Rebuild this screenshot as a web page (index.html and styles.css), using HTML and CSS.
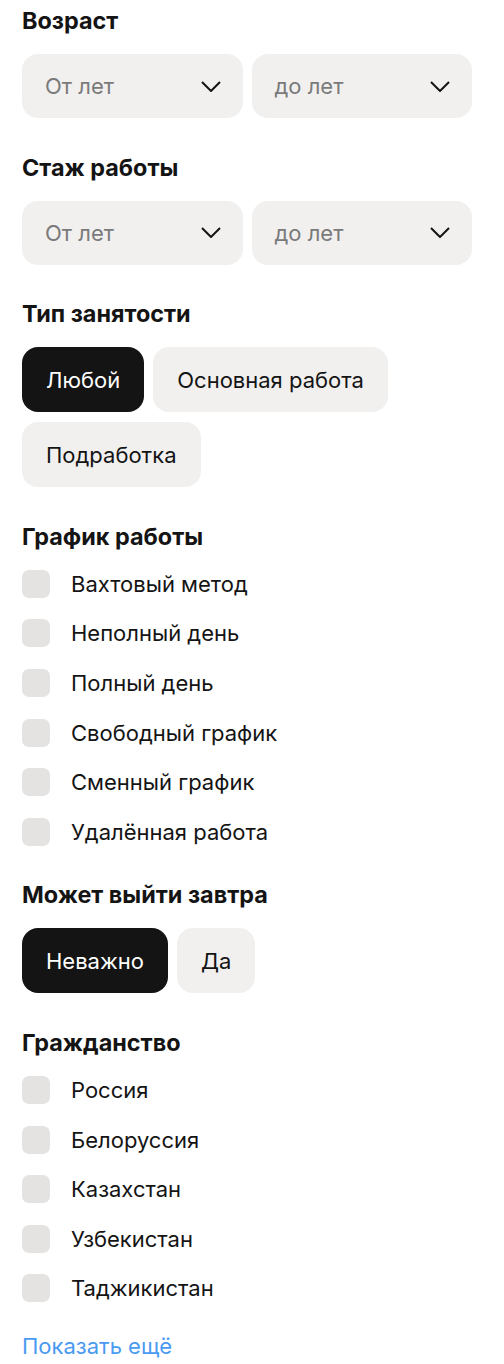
FILE: index.html
```html
<!DOCTYPE html>
<html lang="ru">
<head>
    <meta charset="UTF-8">
    <meta name="viewport" content="width=device-width, initial-scale=1.0">
    <title>Фильтры</title>
    <link rel="stylesheet" href="styles.css">
</head>
<body>
    <div class="filters">
        <section class="filter">
            <h3>Возраст</h3>
            <div class="range">
                <div class="select"><span>От лет</span><svg class="chevron" viewBox="0 0 20 11"><path d="M1 1l9 9 9-9"/></svg></div>
                <div class="select"><span>до лет</span><svg class="chevron" viewBox="0 0 20 11"><path d="M1 1l9 9 9-9"/></svg></div>
            </div>
        </section>

        <section class="filter">
            <h3>Стаж работы</h3>
            <div class="range">
                <div class="select"><span>От лет</span><svg class="chevron" viewBox="0 0 20 11"><path d="M1 1l9 9 9-9"/></svg></div>
                <div class="select"><span>до лет</span><svg class="chevron" viewBox="0 0 20 11"><path d="M1 1l9 9 9-9"/></svg></div>
            </div>
        </section>

        <section class="filter">
            <h3>Тип занятости</h3>
            <div class="chips">
                <button class="chip active">Любой</button>
                <button class="chip">Основная работа</button>
                <button class="chip">Подработка</button>
            </div>
        </section>

        <section class="filter">
            <h3>График работы</h3>
            <div class="checks">
                <label class="check"><span class="box"></span>Вахтовый метод</label>
                <label class="check"><span class="box"></span>Неполный день</label>
                <label class="check"><span class="box"></span>Полный день</label>
                <label class="check"><span class="box"></span>Свободный график</label>
                <label class="check"><span class="box"></span>Сменный график</label>
                <label class="check"><span class="box"></span>Удалённая работа</label>
            </div>
        </section>

        <section class="filter">
            <h3>Может выйти завтра</h3>
            <div class="chips">
                <button class="chip active">Неважно</button>
                <button class="chip">Да</button>
            </div>
        </section>

        <section class="filter">
            <h3>Гражданство</h3>
            <div class="checks">
                <label class="check"><span class="box"></span>Россия</label>
                <label class="check"><span class="box"></span>Белоруссия</label>
                <label class="check"><span class="box"></span>Казахстан</label>
                <label class="check"><span class="box"></span>Узбекистан</label>
                <label class="check"><span class="box"></span>Таджикистан</label>
            </div>
            <a class="more" href="#">Показать ещё</a>
        </section>
    </div>
</body>
</html>
```

FILE: styles.css
```css
body {
    margin: 0;
    padding: 9px 32px 0 22px;
    font-family: Inter, "Noto Sans", sans-serif;
    color: #141414;
    background-color: #fff;
}

.filters {
    display: flex;
    flex-direction: column;
    gap: 37.6px;
}

.filter h3 {
    margin: 0 0 21px;
    font-size: 23.4px;
    line-height: 24px;
    font-weight: 700;
}

.range {
    display: grid;
    grid-template-columns: 1fr 1fr;
    gap: 9px;
}

.select {
    display: flex;
    align-items: center;
    justify-content: space-between;
    height: 64px;
    padding: 0 22px 0 23px;
    border-radius: 16px;
    background-color: #f1f0ef;
    font-size: 22px;
    color: #7a7a7a;
}

.chevron {
    width: 20px;
    height: 11px;
    fill: none;
    stroke: #141414;
    stroke-width: 2;
}

.chips {
    display: flex;
    flex-wrap: wrap;
    gap: 10px 9px;
}

.chip {
    height: 65px;
    padding: 0 24px;
    border: none;
    border-radius: 16px;
    background-color: #f1f0ef;
    font-family: inherit;
    font-size: 22px;
    color: #141414;
}

.chip.active {
    background-color: #141414;
    color: #fff;
}

.checks {
    display: flex;
    flex-direction: column;
    gap: 21.6px;
}

.check {
    display: flex;
    align-items: center;
    gap: 21px;
    height: 28px;
    font-size: 22px;
}

.box {
    width: 28px;
    height: 28px;
    border-radius: 7px;
    background-color: #e4e3e2;
}

.more {
    display: block;
    margin-top: 32px;
    font-size: 22px;
    line-height: 24px;
    color: #4a9af2;
    text-decoration: none;
}
```
